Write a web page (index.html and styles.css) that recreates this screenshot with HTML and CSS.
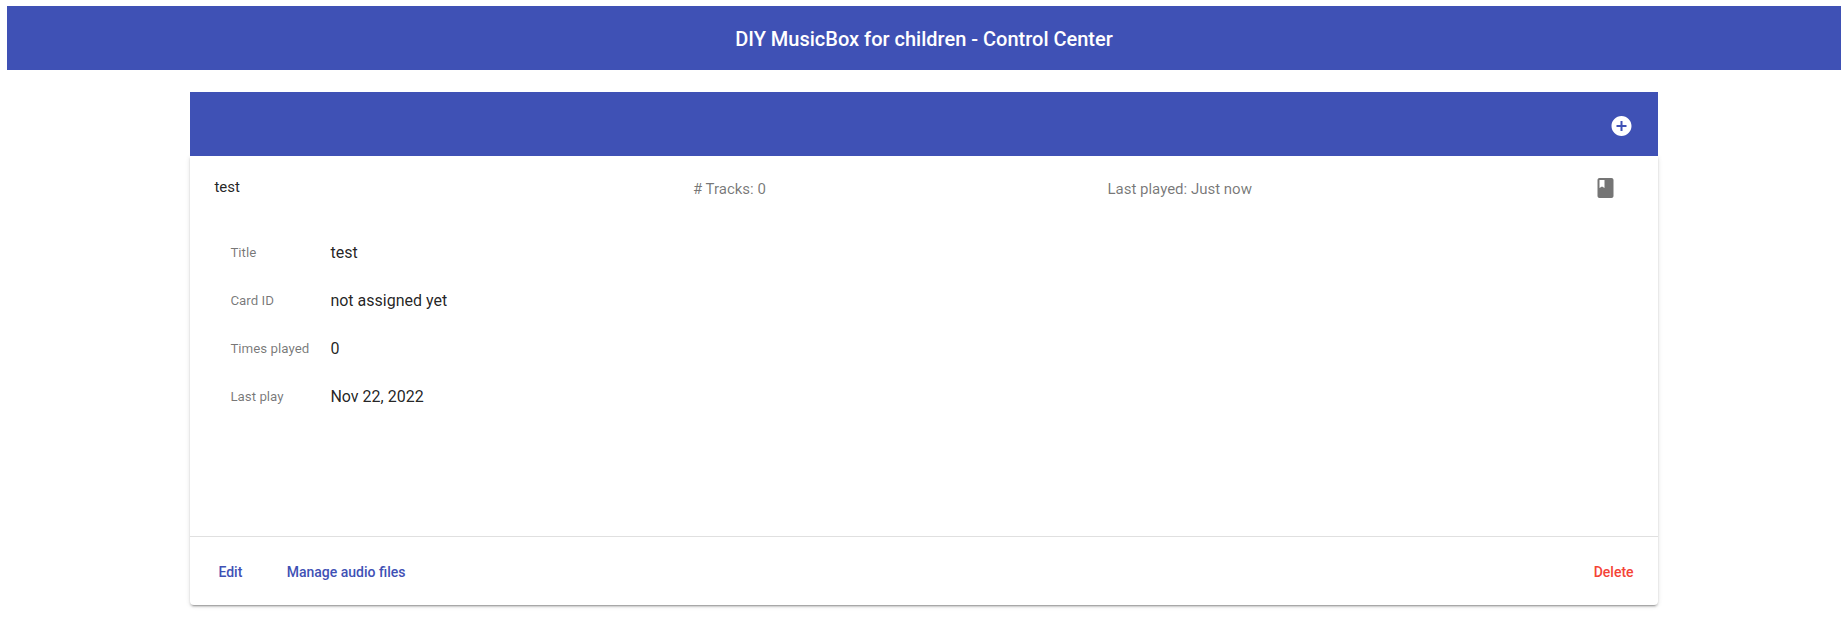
FILE: index.html
```html
<!DOCTYPE html>
<html lang="en">
<head>
<meta charset="utf-8">
<title>DIY MusicBox for children - Control Center</title>
<link rel="stylesheet" href="styles.css">
</head>
<body>
<header class="app-bar"><h1 class="app-title">DIY MusicBox for children - Control Center</h1></header>
<main class="content">
  <div class="toolbar">
    <svg class="icon" viewBox="0.5 0 24 24"><path fill="currentColor" d="M12 2C6.480 2 2 6.480 2 12s4.480 10 10 10 10-4.480 10-10S17.520 2 12 2zm5 11h-4v4h-2v-4H7v-2h4V7h2v4h4v2z"/></svg>
  </div>
  <section class="panel">
    <div class="panel-header">
      <span class="name">test</span>
      <span class="tracks"># Tracks: 0</span>
      <span class="played">Last played: Just now</span>
      <svg class="icon" viewBox="0.5 0 24 24"><path fill="currentColor" d="M18 2H6c-1.100 0-2 .9-2 2v16c0 1.100.9 2 2 2h12c1.100 0 2-.9 2-2V4c0-1.100-.9-2-2-2zM6 4h5v8l-2.500-1.500L6 12V4z"/></svg>
    </div>
    <dl class="details">
      <dt>Title</dt><dd>test</dd>
      <dt>Card ID</dt><dd>not assigned yet</dd>
      <dt>Times played</dt><dd>0</dd>
      <dt>Last play</dt><dd>Nov 22, 2022</dd>
    </dl>
    <div class="actions">
      <button class="button">Edit</button>
      <button class="button">Manage audio files</button>
      <button class="button warn">Delete</button>
    </div>
  </section>
</main>
</body>
</html>
```
FILE: styles.css
```css
* { box-sizing: border-box; }
body {
  margin: 0;
  min-height: 100vh;
  padding: 6px 4px 0 7px;
  background: #fff;
  color: rgba(0, 0, 0, .87);
  font-family: Roboto, sans-serif;
}
.app-bar {
  display: flex;
  align-items: center;
  justify-content: center;
  height: 64px;
  padding-top: 2px;
  background: #3f51b5;
  color: #fff;
}
.app-title { margin: 0; font-size: 20px; font-weight: 500; line-height: 32px; }
.content { width: 80%; margin: 22px auto 0; }
.icon { display: block; width: 24px; height: 24px; flex: none; }
.toolbar {
  position: relative;
  display: flex;
  align-items: center;
  justify-content: flex-end;
  height: 64px;
  padding: 4px 24px 0 0;
  background: #3f51b5;
  color: #fff;
}
.panel {
  height: 449px;
  display: flex;
  flex-direction: column;
  background: #fff;
  border-radius: 0 0 4px 4px;
  box-shadow: 0 3px 1px -2px rgba(0, 0, 0, .2), 0 2px 2px 0 rgba(0, 0, 0, .14), 0 1px 5px 0 rgba(0, 0, 0, .12);
}
.panel-header {
  display: grid;
  grid-template-columns: 478.500px 414.500px 1fr 24px;
  align-items: center;
  height: 64px;
  padding: 0 40px 0 24px;
  font-size: 15px;
  line-height: 20px;
}
.name { padding-bottom: 2px; }
.tracks, .played, .panel-header .icon { color: rgba(0, 0, 0, .54); }
.tracks, .played { padding-top: 2px; }
.details {
  display: grid;
  grid-template-columns: 100px 1fr;
  grid-auto-rows: 48px;
  align-items: center;
  flex: 1;
  align-content: start;
  margin: 0;
  padding: 8px 24px 0 40px;
}
.details dt { font-size: 13.333px; color: rgba(0, 0, 0, .54); }
.details dd { margin: 0; font-size: 16px; }
.actions {
  display: flex;
  align-items: center;
  height: 69px;
  padding: 2px 8px 0 12px;
  border-top: 1px solid rgba(0, 0, 0, .12);
}
.button {
  margin-right: 12.400px;
  padding: 0 16px;
  border: 0;
  background: none;
  color: #3f51b5;
  font: 500 14px/36px Roboto, sans-serif;
}
.button.warn { margin: 0 0 0 auto; color: #f44336; }
```
